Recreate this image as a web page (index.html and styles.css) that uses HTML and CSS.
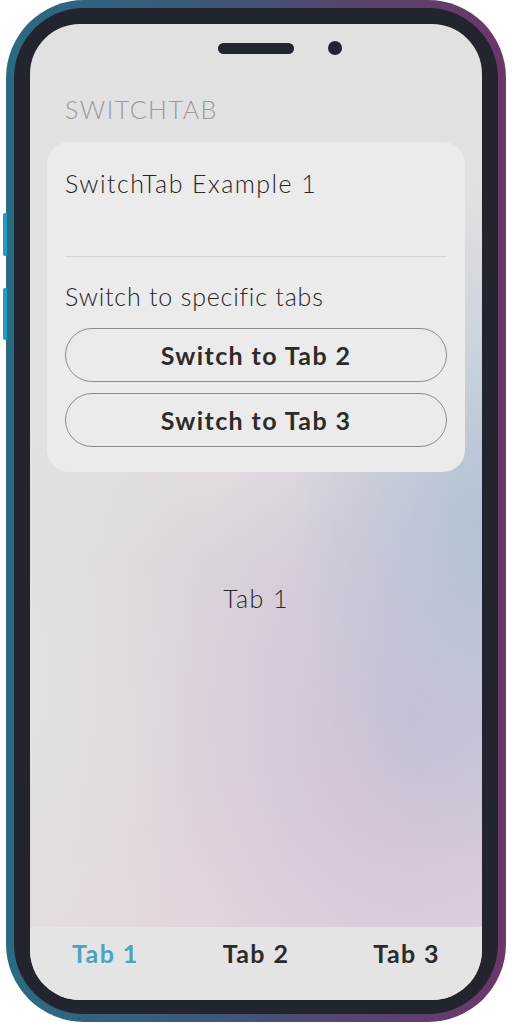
FILE: index.html
```html
<!DOCTYPE html>
<html lang="en">
<head>
<meta charset="utf-8">
<title>SwitchTab</title>
<link rel="stylesheet" href="styles.css">
</head>
<body>
<div class="phone">
  <span class="side-btn side-btn-1"></span>
  <span class="side-btn side-btn-2"></span>
  <div class="bezel">
    <div class="screen">
      <div class="notch">
        <span></span>
        <span class="speaker"></span>
        <span class="camera"></span>
      </div>
      <div class="title">SWITCHTAB</div>
      <div class="card">
        <div class="card-title">SwitchTab Example 1</div>
        <div class="divider"></div>
        <div class="card-label">Switch to specific tabs</div>
        <button class="pill">Switch to Tab 2</button>
        <button class="pill pill-2">Switch to Tab 3</button>
      </div>
      <div class="content">Tab 1</div>
      <div class="tabbar">
        <div class="tab active">Tab 1</div>
        <div class="tab">Tab 2</div>
        <div class="tab">Tab 3</div>
      </div>
    </div>
  </div>
</div>
</body>
</html>
```
FILE: styles.css
```css
html, body {
  margin: 0;
  padding: 0;
  background: #ffffff;
}
body {
  width: 512px;
  height: 1024px;
  overflow: hidden;
  font-family: "Lato", "Noto Sans", sans-serif;
}
.phone {
  position: relative;
  margin-left: 6px;
  width: 500px;
  height: 1022px;
  box-sizing: border-box;
  padding: 8px 8px 8px 8px;
  border-radius: 78px;
  background: linear-gradient(90deg, #2a6b82 0%, #3c5878 40%, #57456f 70%, #6c3769 100%);
}
.side-btn {
  position: absolute;
  left: -3px;
  width: 4px;
  border-radius: 2px 0 0 2px;
  background: #1c9dc6;
}
.side-btn-1 { top: 213px; height: 43px; }
.side-btn-2 { top: 288px; height: 52px; }
.bezel {
  height: 100%;
  box-sizing: border-box;
  padding: 16px 16px 14px 16px;
  border-radius: 70px;
  background: #22252d;
}
.screen {
  height: 100%;
  display: flex;
  flex-direction: column;
  border-radius: 50px;
  overflow: hidden;
  background:
    radial-gradient(ellipse 190px 340px at 100% 500px, rgba(176, 194, 212, 0.95), rgba(176, 194, 212, 0)),
    radial-gradient(ellipse 250px 360px at 380px 700px, rgba(202, 188, 212, 0.85), rgba(202, 188, 212, 0)),
    radial-gradient(ellipse 170px 560px at 0px 650px, rgba(228, 226, 226, 0.95), rgba(228, 226, 226, 0)),
    linear-gradient(180deg, #e1e1e1 0px, #e1e1e1 360px, #dcd5dc 540px, #ded4dc 760px, #e2d5de 900px);
}
.notch {
  display: grid;
  grid-template-columns: 1fr 76px 1fr;
  align-items: center;
  padding-top: 17px;
  height: 14px;
}
.speaker {
  height: 11px;
  border-radius: 6px;
  background: #22252d;
}
.camera {
  width: 14px;
  height: 14px;
  margin-left: 34px;
  border-radius: 50%;
  background: #22252d;
}
.title {
  margin: 39px 0 0 35px;
  font-size: 25px;
  line-height: 30px;
  font-weight: 300;
  letter-spacing: 1.5px;
  color: #9a9a9a;
}
.card {
  margin: 18px 17px 0 17px;
  padding: 26px 18px 25px 18px;
  border-radius: 22px;
  background: #ebebeb;
  display: flex;
  flex-direction: column;
}
.card-title,
.card-label {
  font-size: 25px;
  line-height: 30px;
  font-weight: 300;
  color: #262626;
}
.card-title {
  letter-spacing: 1.45px;
}
.divider {
  margin-top: 58px;
  height: 1px;
  background: #d3d3d3;
}
.card-label {
  margin-top: 24px;
  letter-spacing: 0.8px;
}
.pill {
  margin-top: 17px;
  height: 54px;
  box-sizing: border-box;
  border: 1px solid #8c8c8c;
  border-radius: 27px;
  background: transparent;
  font-family: inherit;
  font-size: 25px;
  font-weight: 700;
  letter-spacing: 1.4px;
  color: #2b2b2b;
  padding: 0;
}
.pill-2 {
  margin-top: 11px;
}
.content {
  margin-top: 111px;
  flex: 1;
  text-align: center;
  font-size: 25px;
  line-height: 30px;
  font-weight: 300;
  letter-spacing: 1.4px;
  color: #262626;
}
.tabbar {
  height: 73px;
  box-sizing: border-box;
  padding-top: 11px;
  display: grid;
  grid-template-columns: 1fr 1fr 1fr;
  background: #e4e4e4;
}
.tab {
  text-align: center;
  font-size: 25px;
  line-height: 30px;
  font-weight: 700;
  letter-spacing: 1.4px;
  color: #2b2b2b;
}
.tab.active {
  color: #4ba3c3;
}
```
